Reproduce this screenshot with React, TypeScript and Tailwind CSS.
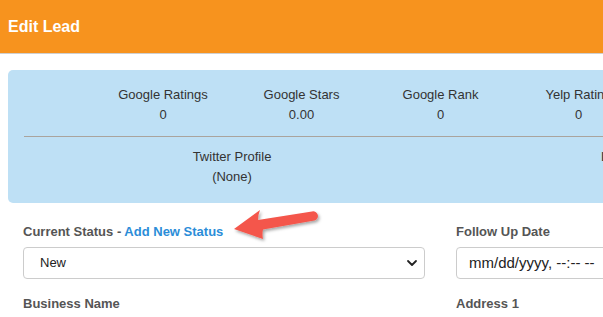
import React from "react";

const font = { fontFamily: '"Liberation Sans", Arial, Helvetica, sans-serif' };

function Stat({ label, value, w }: { label: string; value: string; w: string }) {
  return (
    <div className={`${w} shrink-0 text-center leading-[20px]`}>
      <div>{label}</div>
      <div>{value}</div>
    </div>
  );
}

export default function App() {
  return (
    <div className="w-[603px] h-[317px] overflow-hidden bg-white relative" style={font}>
      <div className="h-[54px] bg-[#f7931e] border-b border-[#cfcfcf] flex items-center px-2">
        <span className="text-white font-bold text-[16px] leading-none">Edit Lead</span>
      </div>

      <div className="pt-[16px] pl-[8px]">
        <div className="w-[900px] h-[133px] bg-[#bee0f5] rounded-[5px] pl-[16px] pt-[15px] text-[13px] text-[#333]">
          <div className="flex">
            <div className="w-[69px] shrink-0" />
            <Stat label="Google Ratings" value="0" w="w-[140px]" />
            <Stat label="Google Stars" value="0.00" w="w-[137px]" />
            <Stat label="Google Rank" value="0" w="w-[141px]" />
            <Stat label="Yelp Rating" value="0" w="w-[135px]" />
          </div>
          <div className="mt-[11px] h-px bg-[#aaa49d]" />
          <div className="flex mt-[10px]">
            <div className="w-[128px] shrink-0" />
            <Stat label="Twitter Profile" value="(None)" w="w-[160px]" />
            <div className="w-[289px] shrink-0" />
            <div className="leading-[20px] whitespace-nowrap">LinkedIn Profile</div>
          </div>
        </div>
      </div>

      <div className="grid grid-cols-[402px_402px] gap-x-[31px] pl-[23px] pt-[20px] w-[900px] text-[13px]">
        <div>
          <div className="font-bold text-[#555] leading-[18px]">
            Current Status - <span className="text-[#2b8dd8]">Add New Status</span>
          </div>
          <div className="mt-[6px] h-[32px] border border-[#cccccc] rounded-[4px] flex items-center justify-between pl-[16px] pr-[6px] text-[#222]">
            <span>New</span>
            <svg width="12" height="8" viewBox="0 0 12 8">
              <path d="M2 2 L6 6 L10 2" fill="none" stroke="#222" strokeWidth="1.8" strokeLinecap="round" strokeLinejoin="round" />
            </svg>
          </div>
          <div className="mt-[16px] font-bold text-[#555] leading-[18px]">Business Name</div>
        </div>
        <div>
          <div className="font-bold text-[#555] leading-[18px]">Follow Up Date</div>
          <div className="mt-[6px] h-[32px] border border-[#cccccc] rounded-[4px] flex items-center pl-[12px] text-[#222] text-[15px]">
            <span>mm/dd/yyyy, --:-- --</span>
          </div>
          <div className="mt-[16px] font-bold text-[#555] leading-[18px]">Address 1</div>
        </div>
      </div>

      <svg className="absolute left-0 top-0 pointer-events-none" width="603" height="317" viewBox="0 0 603 317">
        <defs>
          <filter id="sh" x="-20%" y="-40%" width="140%" height="180%">
            <feDropShadow dx="1.5" dy="2" stdDeviation="1.5" floodColor="#000" floodOpacity="0.35" />
          </filter>
        </defs>
        <path
          d="M234 229 L260 210 Q258 215 258 220 L312 211.5 A4.6 4.6 0 0 1 314.5 220.5 L263 229.5 Q262 234 263 239 Z"
          fill="#f4564b"
          filter="url(#sh)"
        />
      </svg>
    </div>
  );
}
